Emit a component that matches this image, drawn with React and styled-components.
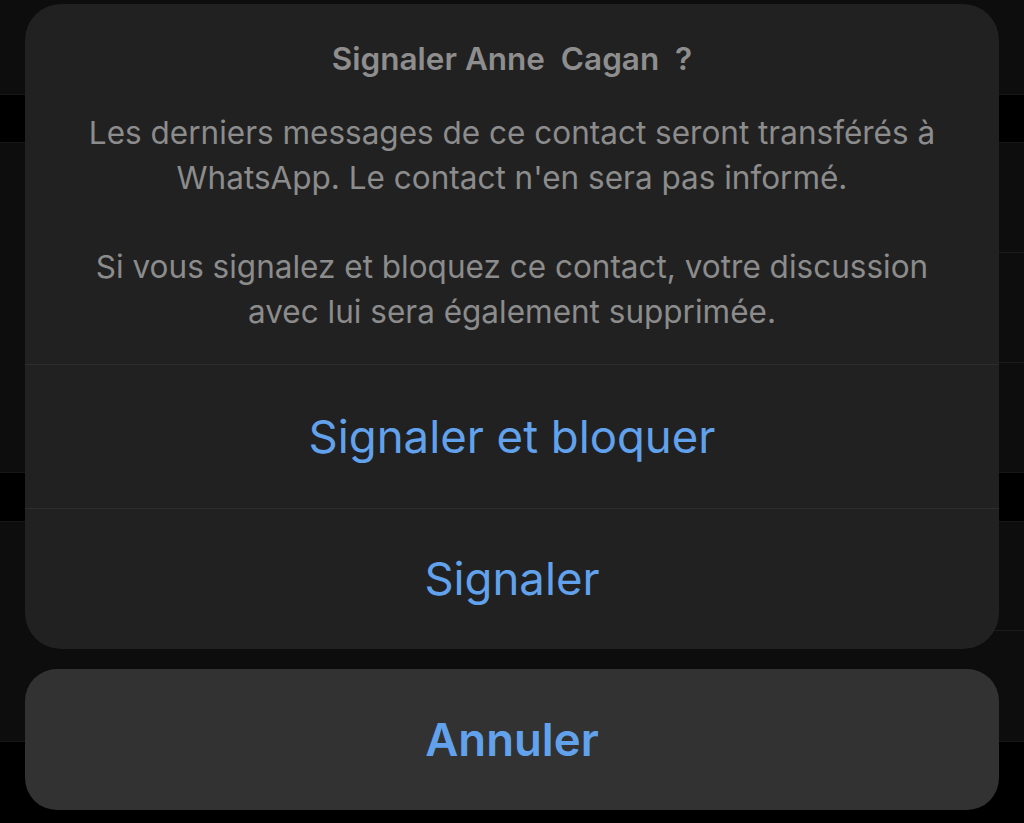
import React from "react";
import styled, { createGlobalStyle } from "styled-components";

const GlobalStyle = createGlobalStyle`
  html, body {
    margin: 0;
    padding: 0;
    background: #000;
  }
  body {
    font-family: Inter, "Noto Sans", "Liberation Sans", sans-serif;
    -webkit-font-smoothing: antialiased;
  }
`;

const Screen = styled.div`
  position: relative;
  width: 1024px;
  height: 823px;
  overflow: hidden;
  background: #000;
`;

/* dimmed settings list sitting behind the action sheet */
const Backdrop = styled.div`
  display: flex;
  flex-direction: column;
`;

const Group = styled.div`
  display: flex;
  flex-direction: column;
  background: #0d0d0d;
  border-bottom: 1px solid #161616;
`;

const Gap = styled.div`
  height: ${(p) => p.$h}px;
  background: #000;
  border-bottom: 1px solid #161616;
`;

const ListRow = styled.div`
  height: ${(p) => p.$h}px;
  margin-left: ${(p) => (p.$divider ? "60px" : "0")};
  border-bottom: ${(p) => (p.$divider ? "1px solid #1b1b1b" : "none")};
`;

const Sheet = styled.div`
  position: absolute;
  left: 25px;
  top: 4px;
  width: 974px;
  display: flex;
  flex-direction: column;
  gap: 20px;
`;

const Card = styled.div`
  background: #212121;
  border-radius: 36px;
  overflow: hidden;
  display: flex;
  flex-direction: column;
`;

const Header = styled.div`
  padding: 37px 40px 29px;
  display: flex;
  flex-direction: column;
  align-items: center;
  text-align: center;
  gap: 34px;
`;

const Title = styled.div`
  font-size: 31.5px;
  line-height: 36px;
  font-weight: 600;
  color: #8e8e8e;
  white-space: pre;
`;

const Message = styled.div`
  font-size: 31.5px;
  line-height: 44.75px;
  font-weight: 400;
  color: #8c8c8c;
  white-space: nowrap;
`;

const Action = styled.button`
  all: unset;
  box-sizing: border-box;
  height: ${(p) => p.$h}px;
  display: flex;
  align-items: center;
  justify-content: center;
  font-family: Inter, "Noto Sans", "Liberation Sans", sans-serif;
  font-size: 45.5px;
  font-weight: ${(p) => (p.$cancel ? 600 : 400)};
  color: #62a2ec;
  border-top: ${(p) => (p.$cancel ? "none" : "1px solid #2d2d2d")};
  background: ${(p) => (p.$cancel ? "#323232" : "transparent")};
  border-radius: ${(p) => (p.$cancel ? "32px" : "0")};
`;

export default function App() {
  return (
    <Screen>
      <GlobalStyle />
      <Backdrop>
        <Group>
          <ListRow $h={94} />
        </Group>
        <Gap $h={47} />
        <Group>
          <ListRow $h={109} $divider />
          <ListRow $h={109} $divider />
          <ListRow $h={109} />
        </Group>
        <Gap $h={48} />
        <Group>
          <ListRow $h={108} $divider />
          <ListRow $h={110} />
        </Group>
        <Gap $h={90} />
      </Backdrop>

      <Sheet>
        <Card>
          <Header>
            <Title>{"Signaler Anne  Cagan  ?"}</Title>
            <Message>
              Les derniers messages de ce contact seront transférés à
              <br />
              WhatsApp. Le contact n'en sera pas informé.
              <br />
              <br />
              Si vous signalez et bloquez ce contact, votre discussion
              <br />
              avec lui sera également supprimée.
            </Message>
          </Header>
          <Action $h={144}>Signaler et bloquer</Action>
          <Action $h={141}>Signaler</Action>
        </Card>
        <Action $cancel $h={141}>
          Annuler
        </Action>
      </Sheet>
    </Screen>
  );
}
